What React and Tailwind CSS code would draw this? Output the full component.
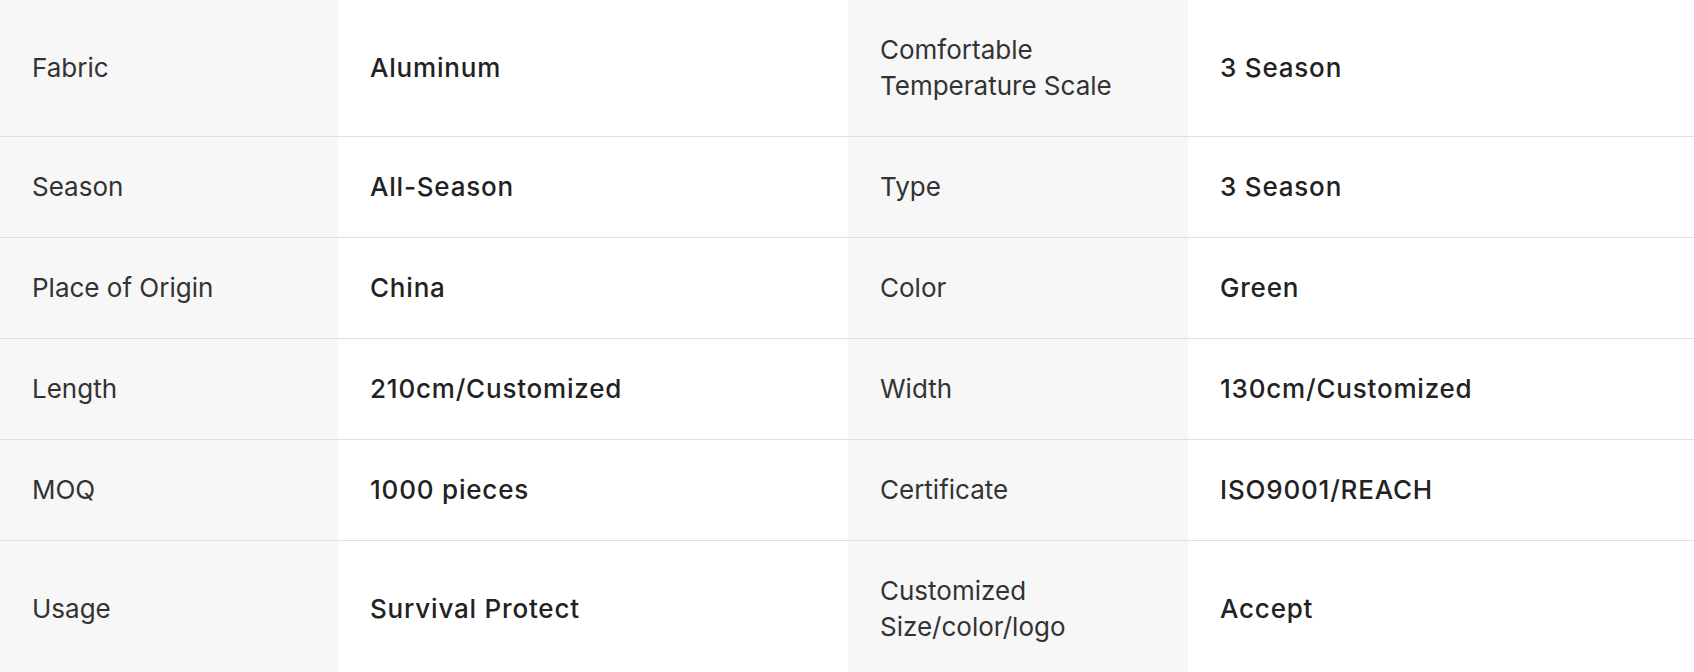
const rows = [
  ['Fabric', 'Aluminum', 'Comfortable Temperature Scale', '3 Season'],
  ['Season', 'All-Season', 'Type', '3 Season'],
  ['Place of Origin', 'China', 'Color', 'Green'],
  ['Length', '210cm/Customized', 'Width', '130cm/Customized'],
  ['MOQ', '1000 pieces', 'Certificate', 'ISO9001/REACH'],
  ['Usage', 'Survival Protect', 'Customized Size/color/logo', 'Accept'],
];

function App() {
  return (
    <div className="w-full bg-white font-['Inter',sans-serif] text-[26px] leading-[36px]">
      {rows.map((r, i) => (
        <div
          key={i}
          className="grid grid-cols-[338px_510px_340px_1fr] border-b border-[#e0e0e0]"
        >
          <div className="bg-[#f7f7f7] px-8 py-8 flex items-center text-[#333333] font-normal">
            {r[0]}
          </div>
          <div className="px-8 py-8 flex items-center text-[#222222] font-medium tracking-[0.8px]">
            {r[1]}
          </div>
          <div className="bg-[#f7f7f7] px-8 py-8 flex items-center text-[#333333] font-normal">
            {r[2]}
          </div>
          <div className="px-8 py-8 flex items-center text-[#222222] font-medium tracking-[0.8px]">
            {r[3]}
          </div>
        </div>
      ))}
    </div>
  );
}

export default App;
